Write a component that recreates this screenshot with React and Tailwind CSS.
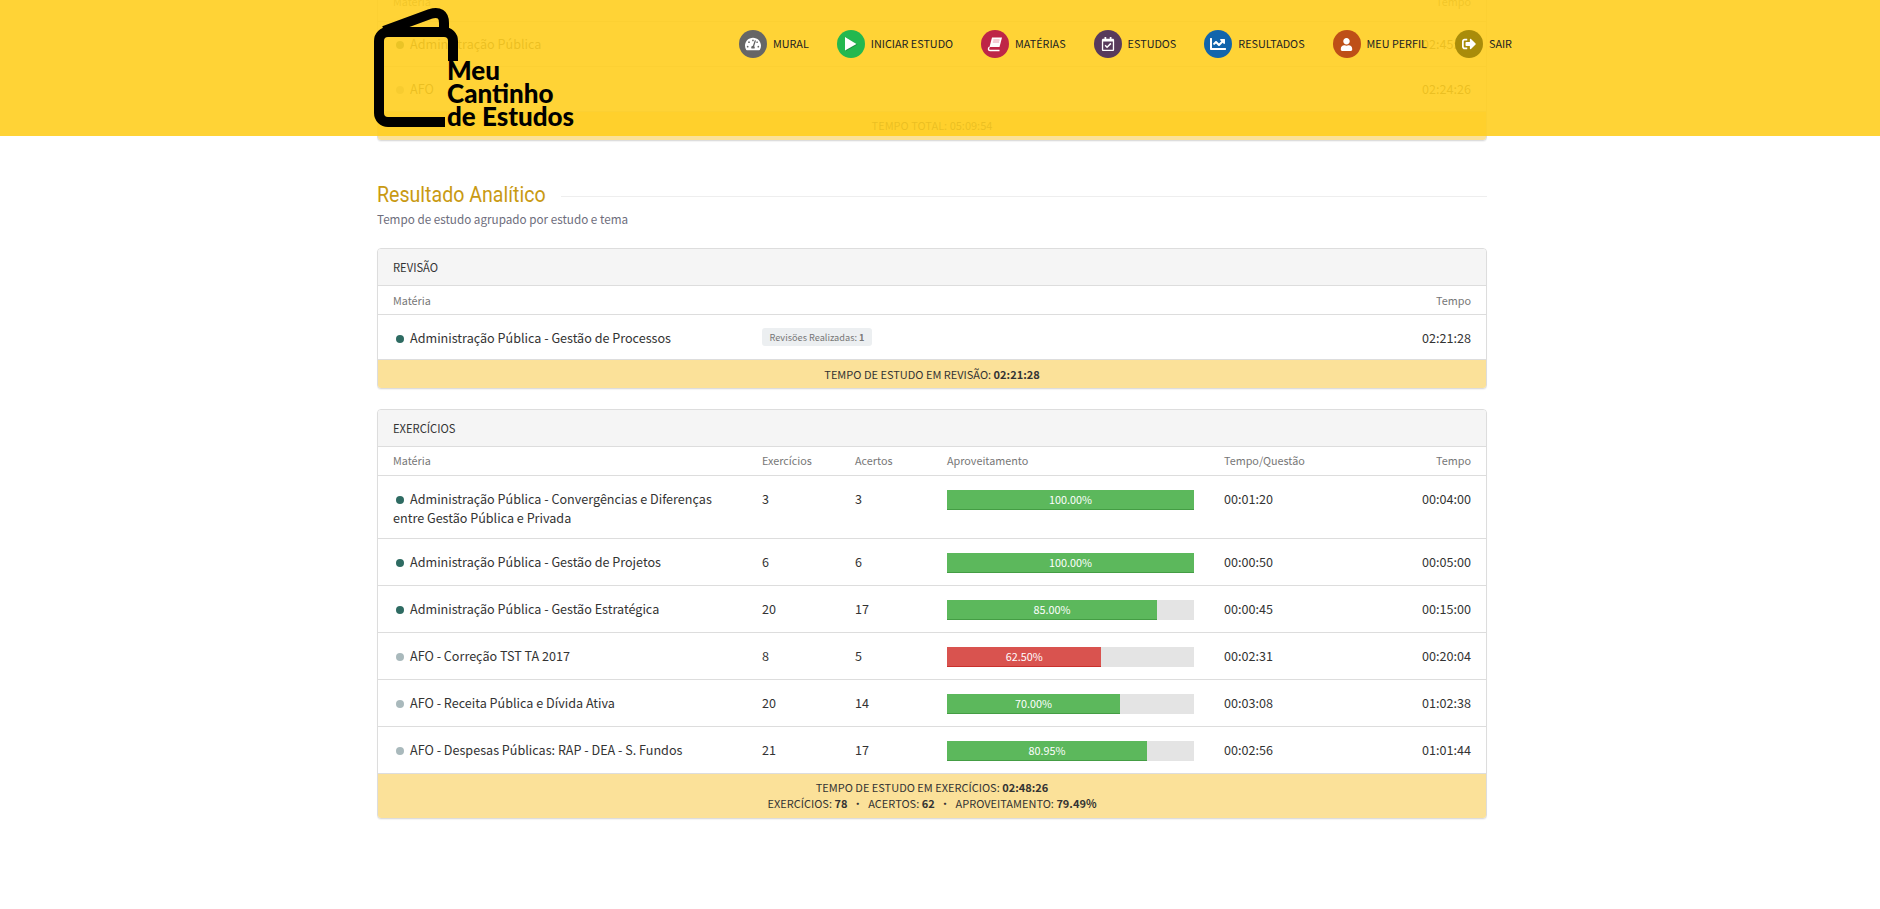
import React from "react";
import { FaTachometerAlt, FaRegCalendarCheck, FaChartLine, FaUser, FaSignOutAlt } from "react-icons/fa";

const sans = "font-['Noto_Sans_CJK_SC','Noto_Sans',sans-serif]";

const BookIcon = () => (
  <svg width="16" height="16" viewBox="0 0 16 16">
    <polygon points="5,1.5 15,1.5 12.5,11 2.5,11" fill="#fff" />
    <path d="M2.5 11 C1 12 1 14.5 3 14.5 H12.5" fill="none" stroke="#fff" strokeWidth="1.4" />
    <path d="M6.3 4 H12.6 M5.8 6 H12.1" stroke="#e99aaa" strokeWidth="1" />
  </svg>
);

const PlayIcon = () => (
  <svg width="14" height="16" viewBox="0 0 14 16">
    <polygon points="2,1.5 13.5,8.5 2,15" fill="#1a8f3e" />
    <polygon points="1,1 12.5,8 1,14.5" fill="#fff" />
  </svg>
);

const nav = [
  { label: "MURAL", bg: "bg-[#666666]", icon: <FaTachometerAlt className="text-white text-[16px]" /> },
  { label: "INICIAR ESTUDO", bg: "bg-[#23b84f]", icon: <PlayIcon /> },
  { label: "MATÉRIAS", bg: "bg-[#be2547]", icon: <BookIcon /> },
  { label: "ESTUDOS", bg: "bg-[#583a5c]", icon: <FaRegCalendarCheck className="text-white text-[14px]" /> },
  { label: "RESULTADOS", bg: "bg-[#1265ac]", icon: <FaChartLine className="text-white text-[16px]" /> },
  { label: "MEU PERFIL", bg: "bg-[#be4f17]", icon: <FaUser className="text-white text-[13px]" /> },
  { label: "SAIR", bg: "bg-[#a98c0a]", icon: <FaSignOutAlt className="text-white text-[14px]" /> },
];

const Dot = ({ light }) => (
  <span className={`inline-block w-2 h-2 rounded-full ml-[3px] mr-[6px] ${light ? "bg-[#a9b9bc]" : "bg-[#2e6b62]"}`} />
);

const Panel = ({ children, className = "" }) => (
  <div className={`border border-[#dddddd] rounded-[4px] overflow-hidden shadow-[0_1px_1px_rgba(0,0,0,0.05)] bg-white ${className}`}>{children}</div>
);

const PanelHead = ({ children }) => (
  <div className="h-[37px] bg-[#f5f5f5] border-b border-[#dddddd] px-[15px] flex items-center text-[11.2px] text-[#333333]">{children}</div>
);

const Foot = ({ children, className = "" }) => (
  <div className={`bg-[#fbe199] border-t border-[#dddddd] text-[#333333] text-[11px] text-center flex flex-col justify-center ${className}`}>{children}</div>
);

const exercises = [
  { dark: true, name: "Administração Pública - Convergências e Diferenças entre Gestão Pública e Privada", ex: 3, ac: 3, pct: 100, color: "bg-[#5cb85c] border-[#449d44]", tq: "00:01:20", t: "00:04:00", tall: true },
  { dark: true, name: "Administração Pública - Gestão de Projetos", ex: 6, ac: 6, pct: 100, color: "bg-[#5cb85c] border-[#449d44]", tq: "00:00:50", t: "00:05:00" },
  { dark: true, name: "Administração Pública - Gestão Estratégica", ex: 20, ac: 17, pct: 85, color: "bg-[#5cb85c] border-[#449d44]", tq: "00:00:45", t: "00:15:00" },
  { dark: false, name: "AFO - Correção TST TA 2017", ex: 8, ac: 5, pct: 62.5, color: "bg-[#d9534f] border-[#c9302c]", tq: "00:02:31", t: "00:20:04" },
  { dark: false, name: "AFO - Receita Pública e Dívida Ativa", ex: 20, ac: 14, pct: 70, color: "bg-[#5cb85c] border-[#449d44]", tq: "00:03:08", t: "01:02:38" },
  { dark: false, name: "AFO - Despesas Públicas: RAP - DEA - S. Fundos", ex: 21, ac: 17, pct: 80.95, color: "bg-[#5cb85c] border-[#449d44]", tq: "00:02:56", t: "01:01:44" },
];

export default function App() {
  return (
    <div className={`relative h-[909px] overflow-hidden bg-white pr-4 ${sans} text-[12.6px] leading-[19px] text-[#333333]`}>
      <header className="absolute top-0 left-0 right-0 z-10 h-[136px] bg-[rgba(255,206,32,0.9)] pr-4">
        <div className="w-[1110px] mx-auto flex items-start">
          <div className="relative -ml-[3px] w-[200px] h-[136px] shrink-0">
            <svg className="absolute left-0 top-[8px]" width="84" height="120" viewBox="0 0 84 120" fill="none" stroke="#000" strokeWidth="10">
              <path d="M79 53 V33 a9 9 0 0 0 -9 -9 H14 a9 9 0 0 0 -9 9 V105 a9 9 0 0 0 9 9 H71" />
              <path d="M10 23 L56 6 Q70 2 70 15 V26" />
            </svg>
            <div className="absolute left-[73px] top-[59px] font-['Lato',sans-serif] font-black text-black text-[26px] leading-[23px] whitespace-nowrap">
              <div>Meu</div>
              <div>Cantinho</div>
              <div>de Estudos</div>
            </div>
          </div>
          <nav className="flex items-center gap-[28px] pt-[30px] ml-[165px]">
            {nav.map((n) => (
              <a key={n.label} className="flex items-center gap-[6px] text-[10.8px] text-[#222222] whitespace-nowrap">
                <span className={`w-[28px] h-[28px] rounded-full flex items-center justify-center ${n.bg}`}>{n.icon}</span>
                <span className="pb-[2px]">{n.label}</span>
              </a>
            ))}
          </nav>
        </div>
      </header>

      <main className="w-[1110px] mx-auto">
        <Panel className="-mt-[19px]">
          <div className="h-[40px] border-b border-[#dddddd] px-[15px] flex justify-between pt-[10px] text-[10.8px] text-[#777777]">
            <span>Matéria</span><span>Tempo</span>
          </div>
          <div className="h-[45px] border-b border-[#dddddd] px-[15px] pb-[2px] flex items-center justify-between">
            <span><Dot />Administração Pública</span><span>02:45:28</span>
          </div>
          <div className="h-[44px] px-[15px] pb-[1px] flex items-center justify-between">
            <span><Dot light />AFO</span><span>02:24:26</span>
          </div>
          <Foot className="h-[29px] pb-[2px]">TEMPO TOTAL: 05:09:54</Foot>
        </Panel>

        <div className="flex items-center mt-[38px] h-[32px]">
          <h2 className="w-[170px] shrink-0 whitespace-nowrap">
            <span className="inline-block origin-left scale-x-[0.89] font-['Roboto',sans-serif] text-[22px] leading-[32px] text-[#c99a12]">Resultado Analítico</span>
          </h2>
          <div className="flex-1 ml-[14px] mt-[2px] border-t border-[#eeeeee]" />
        </div>
        <p className="-mt-[2px] h-[25px] text-[11.7px] leading-[19px] text-[#6d6d7c]">Tempo de estudo agrupado por estudo e tema</p>

        <Panel className="mt-[14px]">
          <PanelHead>REVISÃO</PanelHead>
          <div className="h-[29px] border-b border-[#dddddd] px-[15px] flex items-center text-[10.8px] text-[#777777]">Matéria<span className="ml-auto">Tempo</span></div>
          <div className="h-[44px] px-[15px] flex items-center">
            <span className="w-[369px] shrink-0"><Dot />Administração Pública - Gestão de Processos</span>
            <span className="h-[18px] w-[110px] rounded-[3px] bg-[#eceff1] text-[9.2px] leading-[18px] text-center text-[#777777] whitespace-nowrap">Revisões Realizadas: <b className="font-bold">1</b></span>
            <span className="ml-auto">02:21:28</span>
          </div>
          <Foot className="h-[29px]"><div>TEMPO DE ESTUDO EM REVISÃO: <b>02:21:28</b></div></Foot>
        </Panel>

        <Panel className="mt-[20px]">
          <PanelHead>EXERCÍCIOS</PanelHead>
          <table className="w-full table-fixed border-collapse">
            <colgroup>
              <col className="w-[369px]" /><col className="w-[93px]" /><col className="w-[92px]" /><col className="w-[277px]" /><col />
            </colgroup>
            <thead>
              <tr className="text-[10.8px] text-[#777777] text-left border-b border-[#dddddd]">
                <th className="h-[28px] pl-[15px] font-normal">Matéria</th>
                <th className="pl-[15px] font-normal">Exercícios</th>
                <th className="pl-[15px] font-normal">Acertos</th>
                <th className="pl-[15px] font-normal">Aproveitamento</th>
                <th className="font-normal">
                  <div className="flex justify-between pl-[15px] pr-[15px]"><span>Tempo/Questão</span><span>Tempo</span></div>
                </th>
              </tr>
            </thead>
            <tbody>
              {exercises.map((r) => (
                <tr key={r.name} className="border-b border-[#dddddd]">
                  <td className={`${r.tall ? "h-[63px]" : "h-[47px]"} align-top pt-[13px] pl-[15px] pr-[15px]`}><Dot light={!r.dark} />{r.name}</td>
                  <td className="align-top pt-[13px] pl-[15px]">{r.ex}</td>
                  <td className="align-top pt-[13px] pl-[15px]">{r.ac}</td>
                  <td className="align-top pt-[14px] pl-[15px] pr-[15px]">
                    <div className="h-[20px] bg-[#e4e4e4]">
                      <div className={`h-[20px] border-b ${r.color} text-white text-[10.8px] leading-[19px] text-center`} style={{ width: `${r.pct}%` }}>{r.pct.toFixed(2)}%</div>
                    </div>
                  </td>
                  <td className="align-top pt-[13px]">
                    <div className="flex justify-between pl-[15px] pr-[15px]"><span>{r.tq}</span><span>{r.t}</span></div>
                  </td>
                </tr>
              ))}
            </tbody>
          </table>
          <Foot className="h-[45px] leading-[16px] pb-[2px] -mt-px border-t-[#dddddd]">
            <div>TEMPO DE ESTUDO EM EXERCÍCIOS: <b>02:48:26</b></div>
            <div>EXERCÍCIOS: <b>78</b>&nbsp; • &nbsp;ACERTOS: <b>62</b>&nbsp; • &nbsp;APROVEITAMENTO: <b>79.49%</b></div>
          </Foot>
        </Panel>
      </main>
    </div>
  );
}
